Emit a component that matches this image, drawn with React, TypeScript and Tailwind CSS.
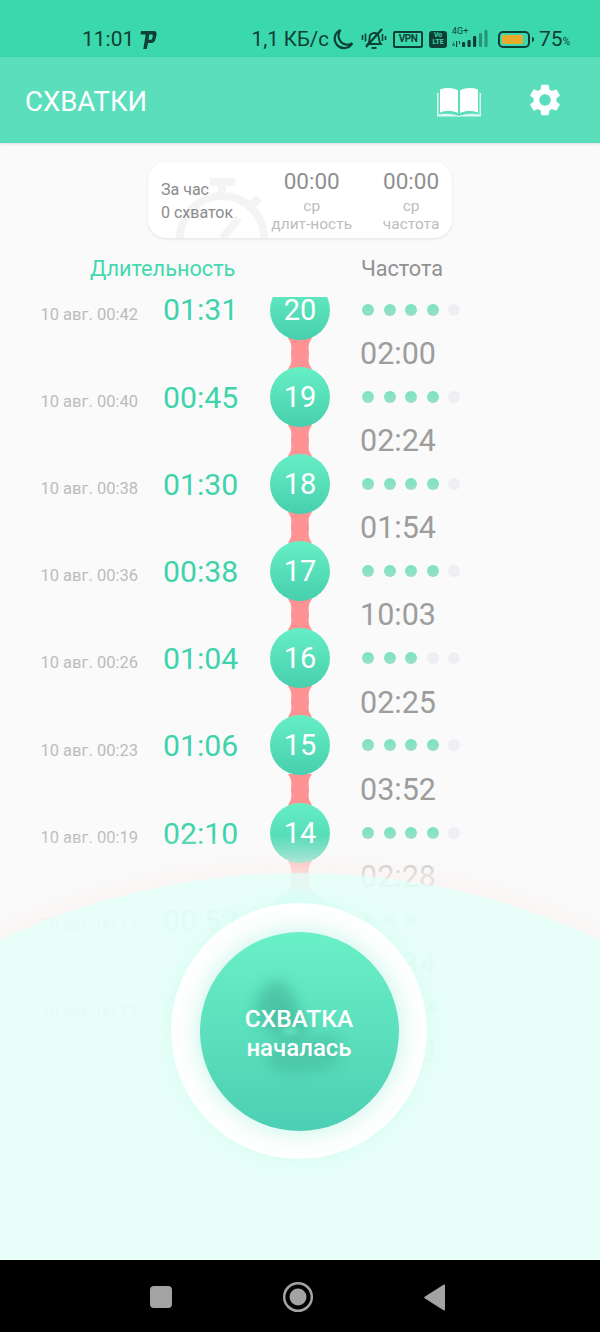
import { MdSettings } from "react-icons/md";

type Row = {
  n: number;
  date: string;
  dur: string;
  filled: number;
  next: string;
};

const ROWS: Row[] = [
  { n: 20, date: "10 авг. 00:42", dur: "01:31", filled: 4, next: "02:00" },
  { n: 19, date: "10 авг. 00:40", dur: "00:45", filled: 4, next: "02:24" },
  { n: 18, date: "10 авг. 00:38", dur: "01:30", filled: 4, next: "01:54" },
  { n: 17, date: "10 авг. 00:36", dur: "00:38", filled: 4, next: "10:03" },
  { n: 16, date: "10 авг. 00:26", dur: "01:04", filled: 3, next: "02:25" },
  { n: 15, date: "10 авг. 00:23", dur: "01:06", filled: 4, next: "03:52" },
  { n: 14, date: "10 авг. 00:19", dur: "02:10", filled: 4, next: "02:28" },
  { n: 13, date: "10 авг. 00:17", dur: "00:52", filled: 3, next: "03:34" },
  { n: 12, date: "10 авг. 00:13", dur: "01:12", filled: 4, next: "02:10" },
];

const StatusIcons = () => (
  <div className="flex items-center text-[#0e3f34]">
    <span className="text-[20.500px] leading-none">1,1 КБ/с</span>
    {/* moon */}
    <svg width="22" height="22" viewBox="0 0 22 22" className="ml-[3px]" fill="none" stroke="currentColor" strokeWidth="2.200">
      <path d="M8.500 2a9 9 0 0 0 11.800 13.300A9.400 9.400 0 1 1 8.500 2z" />
    </svg>
    {/* muted bell */}
    <svg width="26" height="24" viewBox="0 0 26 24" className="ml-[7px]" fill="none" stroke="currentColor" strokeWidth="1.900">
      <path d="M7 17c1.600-1.600 1.600-4 1.600-6.500a4.600 4.600 0 0 1 8.800-1.800c.5 1.200.2 5.300 2.400 8.300H7z" />
      <path d="M10.500 21h5" />
      <path d="M5 20 21 2" strokeWidth="2.200" />
      <path d="M1.500 8v5M4.500 6.500v8M21.500 7v7M24.500 9v4" strokeWidth="1.600" />
    </svg>
    <span className="ml-[6px] flex h-[17px] w-[30px] items-center justify-center rounded-[2px] border-2 border-[#0e3f34] text-[10px] font-bold leading-none tracking-tighter">
      VPN
    </span>
    <span className="ml-[6px] flex h-[17px] w-[18px] flex-col items-center justify-center rounded-[3px] bg-[#0e3f34] text-[7px] font-bold leading-[7px] text-[#3bd8ae]">
      <span>Vo</span>
      <span>LTE</span>
    </span>
    <div className="relative ml-[5px] h-[20px] w-[39px]">
      <span className="absolute left-0 top-[-3px] text-[9px] leading-[10px]">4G+</span>
      <svg width="39" height="20" viewBox="0 0 39 20" fill="currentColor">
        <path d="M2 13l-2 3h2zM4 12h1.200v6H4zM7 12h1v3H7zM0 15.500h3v1H0z" />
        <rect x="10" y="13" width="3.200" height="5" rx="1" />
        <rect x="15.500" y="11" width="3.200" height="7" rx="1" />
        <rect x="21" y="7" width="3.200" height="11" rx="1" />
        <rect x="27" y="4" width="3" height="14" rx="1" opacity=".45" />
        <rect x="32.500" y="1" width="3" height="17" rx="1" opacity=".45" />
      </svg>
    </div>
    <div className="ml-[7px] flex items-center">
      <div className="flex h-[17px] w-[32px] items-center rounded-[5px] border-2 border-[#0e3f34] pl-[2px]">
        <div className="h-[9px] w-[21px] rounded-[1px] bg-[#e9ab2e]" />
      </div>
      <div className="ml-[2px] h-[5px] w-[2px] rounded-r-sm bg-[#0e3f34]" />
    </div>
    <span className="ml-[5px] text-[21px] leading-none">75</span>
    <span className="mt-[5px] text-[10px] leading-none">%</span>
  </div>
);

const Dots = ({ filled }: { filled: number }) => (
  <div className="ml-[32px] flex gap-[9.500px]">
    {[0, 1, 2, 3, 4].map((i) => (
      <div
        key={i}
        className={
          i < filled
            ? "size-3 rounded-full bg-gradient-to-b from-[#7ae3c1] to-[#97dfc8]"
            : "size-3 rounded-full bg-[#eeeef4]"
        }
      />
    ))}
  </div>
);

const Contraction = ({ row }: { row: Row }) => (
  <div className="flex flex-col">
    <div className="flex h-[60px] items-center">
      <div className="mt-[11px] w-[138px] text-right text-[16.500px] text-[#bcbcbc]">{row.date}</div>
      <div className="ml-[25px] w-[107px] pt-[2px] text-[30.200px] leading-none text-[#3fd3ab]">{row.dur}</div>
      <div className="relative z-10 flex size-[60px] items-center justify-center rounded-full bg-gradient-to-b from-[#66efc5] to-[#47cfae] pt-[1px] text-[29px] leading-none text-white">
        {row.n}
      </div>
      <Dots filled={row.filled} />
    </div>
    <div className="flex h-[27.200px] items-center">
      <div className="ml-[285px] h-[27px] w-[30px]">
        <svg width="30" height="27" viewBox="0 0 30 27" overflow="visible">
          <path d="M3-2H27C22 5 24 9 24 13.500S22 22 27 29H3C8 22 6 18 6 13.500S8 5 3-2z" fill="#ff9292" />
        </svg>
      </div>
      <div className="ml-[45px] pt-[2px] text-[30.500px] leading-none text-[#9d9d9d]">{row.next}</div>
    </div>
  </div>
);

export default function App() {
  return (
    <div className="relative flex h-[1332px] w-[600px] flex-col overflow-hidden bg-[#fafafa] font-['Roboto',sans-serif]">
      {/* status bar */}
      <div className="flex h-[57px] shrink-0 items-center justify-between bg-[#3bd8ae] pl-[82px] pr-[30px] pt-[21px] text-[#0e3f34]">
        <div className="flex items-center">
          <span className="text-[21px] leading-none">11:01</span>
          <svg width="17" height="19" viewBox="0 0 17 19" className="ml-[6px]" fill="currentColor" fillRule="evenodd">
            <path d="M1 1H13.500C16 1 17 2.500 16.500 5L15.500 9C15 11.500 13.500 13 11 13H8L6.800 19H3.300L5.700 4.500H.500zM9.300 4.500 8.600 9.800H10.500C11.500 9.800 12 9.300 12.200 8.500L12.800 6C13 5 12.600 4.500 11.600 4.500z" />
          </svg>
        </div>
        <StatusIcons />
      </div>

      {/* app bar */}
      <div className="relative z-30 flex h-[86px] shrink-0 items-center bg-[#5adebb] pl-[25px] pr-[36px] shadow-[0_1px_3px_rgba(0,0,0,0.12)]">
        <span className="pt-[3px] text-[27.500px] leading-none text-white">СХВАТКИ</span>
        <svg width="44" height="30" viewBox="0 0 44 30" className="ml-auto mt-[3px]" fill="white">
          <path d="M3 2.500C9 .5 15 .5 21 3.500V26C15 23.500 9 23.500 3 25.500z" />
          <path d="M41 2.500C35 .5 29 .5 23 3.500V26C29 23.500 35 23.500 41 25.500z" />
          <path d="M0 6h1.500v21.500c7-1.500 14-1 20.500 1.500 6.500-2.500 13.500-3 20.500-1.500V6H44v23.500H26c-2 0-3 .5-4 .5s-2-.5-4-.5H0z" opacity=".8" />
        </svg>
        <MdSettings className="ml-[45px] text-[38px] text-white" />
      </div>

      {/* summary card */}
      <div className="relative mx-auto mt-[19px] flex h-[76px] w-[304px] shrink-0 overflow-hidden rounded-[18px] bg-white shadow-[0_1px_3px_rgba(0,0,0,0.1)]">
        <svg width="110" height="76" viewBox="0 0 110 76" className="absolute left-[19px] top-0" fill="none" stroke="#f4f4f4" strokeWidth="8">
          <path d="M43 20h25" />
          <path d="M55 20v12" />
          <circle cx="55" cy="76" r="42" />
          <path d="M84 44l8-8" />
          <path d="M55 76 72 56" />
        </svg>
        <div className="relative ml-[13px] mt-[16px] w-[103px] text-[16px] leading-[23px] text-[#8b8b8b]">
          <div>За час</div>
          <div>0 схваток</div>
        </div>
        <div className="relative ml-[-15.500px] flex w-[127px] flex-col items-center pt-[6px]">
          <div className="text-[22.500px] leading-[26px] text-[#8f8f8f]">00:00</div>
          <div className="mt-[3px] text-center text-[15.500px] leading-[18px] text-[#bdbdbd]">
            ср
            <br />
            длит-ность
          </div>
        </div>
        <div className="relative ml-[-5px] flex w-[82px] flex-col items-center pt-[6px]">
          <div className="text-[22.500px] leading-[26px] text-[#8f8f8f]">00:00</div>
          <div className="mt-[3px] text-center text-[15.500px] leading-[18px] text-[#bdbdbd]">
            ср
            <br />
            частота
          </div>
        </div>
      </div>

      {/* column titles */}
      <div className="flex h-[59px] shrink-0 items-center pt-[3px] text-[21.700px] leading-none">
        <span className="ml-[90px] text-[#45d8b0]">Длительность</span>
        <span className="ml-[125.500px] text-[#919191]">Частота</span>
      </div>

      {/* list */}
      <div className="min-h-0 flex-1 overflow-hidden">
        <div className="mt-[-17.500px] flex flex-col">
          {ROWS.map((row) => (
            <Contraction key={row.n} row={row} />
          ))}
        </div>
      </div>

      {/* fade + arc over the list */}
      <div className="pointer-events-none absolute left-0 right-0 top-[830px] z-20 h-[430px] overflow-hidden">
        <div className="absolute inset-0 bg-[linear-gradient(to_bottom,rgba(250,250,250,0)_5px,rgba(250,250,250,0.5)_30px,rgba(250,250,250,0.76)_45px,rgba(250,250,250,0.87)_90px)]" />
        <div className="absolute left-[-405px] top-[43px] size-[1410px] rounded-full bg-[rgba(222,255,248,0.7)] shadow-[0_-8px_24px_rgba(255,205,190,0.12)]" />
      </div>

      {/* start button */}
      <div className="absolute left-[171px] top-[903px] z-30 flex size-[256px] items-center justify-center rounded-full bg-white shadow-[0_0_16px_rgba(210,255,240,0.9)]">
        <div className="relative flex size-[199px] flex-col items-center justify-center overflow-hidden rounded-full bg-gradient-to-b from-[#6af0c7] to-[#4ccfb3] pt-[4px] shadow-[0_0_26px_rgba(120,230,200,0.45)]">
          {/* blurred mother-and-child shape behind the label, 200,931 is its corner */}
          <svg width="199" height="199" viewBox="0 0 199 199" className="absolute inset-0">
            <defs>
              <filter id="soft" x="-40%" y="-40%" width="180%" height="180%">
                <feGaussianBlur stdDeviation="7" />
              </filter>
              <filter id="softer" x="-40%" y="-40%" width="180%" height="180%">
                <feGaussianBlur stdDeviation="2.500" />
              </filter>
            </defs>
            <path
              d="M78 49c8 2 14 10 17 20s9 16 11 24-4 13-14 13-24-6-31-14-6-22-1-30 12-14 18-13z"
              fill="#349e85"
              opacity=".45"
              filter="url(#soft)"
            />
            <path
              d="M88 108c14 4 24-4 38-5 10 0 16 8 14 20s-14 14-30 16-32 4-40-6-4-20 18-25z"
              fill="#349e85"
              opacity=".3"
              filter="url(#soft)"
            />
            <ellipse cx="90" cy="99" rx="9" ry="4" fill="#62e2bd" filter="url(#softer)" />
          </svg>
          <span className="relative text-[24.500px] font-medium leading-[30px] text-white">СХВАТКА</span>
          <span className="relative text-[24px] font-medium leading-[29px] text-white">началась</span>
        </div>
      </div>

      {/* android nav */}
      <div className="relative z-30 flex h-[72px] shrink-0 items-center bg-black pt-[2px]">
        <div className="ml-[150px] size-[22px] rounded-[4px] bg-[#a3a3a3]" />
        <svg width="32" height="32" viewBox="0 0 32 32" className="ml-[110px]">
          <circle cx="16" cy="16" r="13.800" fill="none" stroke="#a3a3a3" strokeWidth="2.500" />
          <circle cx="16" cy="16" r="8.500" fill="#a3a3a3" />
        </svg>
        <svg width="22" height="27" viewBox="0 0 22 27" className="ml-[110px]" fill="#a3a3a3">
          <path d="M21 1.500V25.500a1 1 0 0 1-1.500.8L1 14.500a1.200 1.200 0 0 1 0-2L19.500.700A1 1 0 0 1 21 1.500z" />
        </svg>
      </div>
    </div>
  );
}
